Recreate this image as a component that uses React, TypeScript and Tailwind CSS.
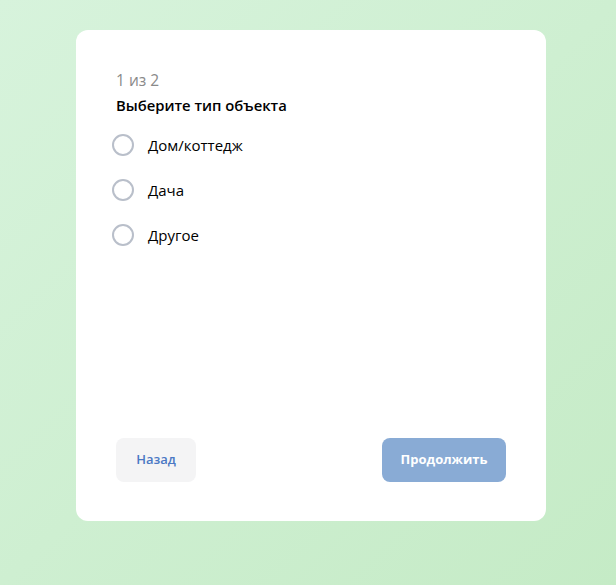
import { useState } from "react";

const options = ["Дом/коттедж", "Дача", "Другое"];

export default function App() {
  const [selected, setSelected] = useState<number | null>(null);

  return (
    <div
      className="min-h-screen w-full bg-gradient-to-br from-[#d7f3dc] to-[#c5ebc6] pt-[30px] pl-[6px] flex justify-center"
      style={{ fontFamily: '"Open Sans", "Noto Sans", sans-serif' }}
    >
      {/* Card */}
      <div className="w-[470px] h-[491px] bg-white rounded-[12px] px-10 pt-10 pb-[39px] flex flex-col justify-between">
        <div>
          <div className="text-[15.5px] leading-5 text-[#8a8a8a]">1 из 2</div>
          <div className="mt-[5px] text-[14.8px] leading-5 font-semibold text-black">
            Выберите тип объекта
          </div>

          <div className="mt-[18px] flex flex-col gap-[21px]">
            {options.map((opt, i) => (
              <label
                key={opt}
                className="flex items-center h-6 -ml-1 cursor-pointer"
                onClick={() => setSelected(i)}
              >
                <span className="w-[22px] h-[22px] rounded-full border-2 border-[#b9bfca] flex items-center justify-center">
                  {selected === i && <span className="w-2.5 h-2.5 rounded-full bg-[#4a7ac8]" />}
                </span>
                <span className="ml-[14px] text-[15px] text-black">{opt}</span>
              </label>
            ))}
          </div>
        </div>

        {/* Footer buttons */}
        <div className="flex items-center justify-between">
          <button className="w-[80px] h-[44px] rounded-[8px] bg-[#f4f4f5] text-[13px] font-semibold text-[#4a78c4]">
            Назад
          </button>
          <button className="w-[124px] h-[44px] rounded-[8px] bg-[#89abd5] text-[13px] font-bold text-white">
            Продолжить
          </button>
        </div>
      </div>
    </div>
  );
}
